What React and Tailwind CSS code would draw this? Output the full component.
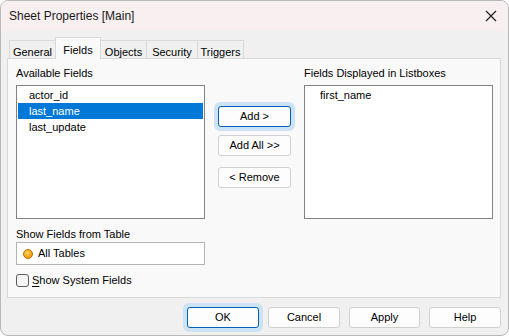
import React from "react";

const font = { fontFamily: '"Liberation Sans", Arial, sans-serif' };

function Tab({ label, selected, w }) {
  if (selected) {
    return (
      <div
        className="relative z-10 -ml-px mb-[-1px] flex h-[22px] items-start justify-center border border-b-0 border-[#d9d9d9] bg-[#f9f9f9] pt-[4px] text-[11px]"
        style={{ width: w }}
      >
        {label}
      </div>
    );
  }
  return (
    <div
      className="-ml-px flex h-[18px] items-start justify-center border border-b-0 border-[#d9d9d9] bg-[#f0f0f0] pt-[3px] text-[11px] first:ml-0"
      style={{ width: w }}
    >
      {label}
    </div>
  );
}

function Btn({ children, focused, className = "" }) {
  if (focused) {
    return (
      <div className={"rounded-[6px] bg-[#cde3f5] p-[4px] -m-[4px] " + className}>
        <div className="flex h-[21px] w-[73px] items-center justify-center rounded-[3px] border border-[#005fb8] bg-[#fdfdfd] text-[11px]">
          {children}
        </div>
      </div>
    );
  }
  return (
    <div
      className={
        "flex h-[21px] w-[73px] items-center justify-center rounded-[3px] border border-[#d0d0d0] bg-[#fdfdfd] text-[11px] " +
        className
      }
    >
      {children}
    </div>
  );
}

function BottomBtn({ children, focused, w = 72 }) {
  if (focused) {
    return (
      <div className="-m-[4px] rounded-[6px] bg-[#cde3f5] p-[4px]">
        <div
          className="flex h-[21px] items-center justify-center rounded-[3px] border border-[#005fb8] bg-[#fdfdfd] text-[11px]"
          style={{ width: w }}
        >
          {children}
        </div>
      </div>
    );
  }
  return (
    <div
      className="flex h-[21px] items-center justify-center rounded-[3px] border border-[#d0d0d0] bg-[#fdfdfd] text-[11px]"
      style={{ width: w }}
    >
      {children}
    </div>
  );
}

export default function App() {
  return (
    <div
      className="flex h-[336px] w-[509px] flex-col overflow-hidden rounded-[8px] border border-[#b9b9b9] bg-[#f0f0f0] text-black"
      style={font}
    >
      {/* Title bar */}
      <div className="flex h-[30px] shrink-0 items-center justify-between bg-[#f7eff0] pl-[8px] pr-[8px]">
        <span className="text-[12px] leading-none text-[#1a1a1a]">Sheet Properties [Main]</span>
        <svg width="12" height="12" viewBox="0 0 12 12" className="mr-[3px]">
          <path d="M1 1 L11 11 M11 1 L1 11" stroke="#1a1a1a" strokeWidth="1.1" fill="none" />
        </svg>
      </div>

      {/* Body */}
      <div className="flex flex-1 flex-col pl-[6px] pr-[7px] pt-[6px]">
        {/* Tabs */}
        <div className="ml-[2px] flex items-end">
          <Tab label="General" w={47} />
          <Tab label="Fields" w={46} selected />
          <Tab label="Objects" w={47} />
          <Tab label="Security" w={52} />
          <Tab label="Triggers" w={47} />
        </div>

        {/* Panel */}
        <div className="flex h-[240px] flex-col border border-[#d9d9d9] bg-[#f9f9f9] pl-[8px] pr-[7px] pt-[8px]">
          <div className="flex">
            {/* Left column */}
            <div className="flex w-[189px] flex-col">
              <div className="text-[11px] leading-[13px]">Available Fields</div>
              <div className="mt-[5px] h-[134px] border border-[#828282] bg-white p-px">
                <div className="flex h-[16px] items-center pl-[11px] text-[11px]">actor_id</div>
                <div className="flex h-[16px] items-center bg-[#0078d7] pl-[11px] text-[11px] text-white">
                  last_name
                </div>
                <div className="flex h-[16px] items-center pl-[11px] text-[11px]">last_update</div>
              </div>
              <div className="mt-[9px] text-[11px] leading-[13px]">Show Fields from Table</div>
              <div className="mt-px flex h-[23px] items-center border border-[#b4b4b4] bg-white pl-[6px]">
                <span className="h-[10px] w-[10px] rounded-full border border-[#b86f00] bg-[radial-gradient(circle_at_40%_35%,#ffcf6a,#f29a00_70%)]" />
                <span className="ml-[5px] text-[11px]">All Tables</span>
              </div>
              <div className="mt-[8px] flex h-[14px] items-center">
                <span className="h-[13px] w-[13px] rounded-[3px] border border-[#5c5c5c] bg-[#f5f5f5]" />
                <span className="ml-[3px] text-[11px]">
                  <span className="underline underline-offset-2">S</span>how System Fields
                </span>
              </div>
            </div>

            {/* Middle buttons */}
            <div className="ml-[13px] flex w-[73px] flex-col pt-[39px]">
              <Btn focused>Add &gt;</Btn>
              <Btn className="mt-[8px]">Add All &gt;&gt;</Btn>
              <Btn className="mt-[11px]">&lt; Remove</Btn>
            </div>

            {/* Right column */}
            <div className="ml-[13px] flex w-[189px] flex-col">
              <div className="text-[11px] leading-[13px]">Fields Displayed in Listboxes</div>
              <div className="mt-[5px] h-[134px] border border-[#828282] bg-white p-px">
                <div className="flex h-[16px] items-center pl-[14px] text-[11px]">first_name</div>
              </div>
            </div>
          </div>
        </div>

        {/* Bottom buttons */}
        <div className="mt-[9px] flex justify-end gap-[9px] pr-0">
          <BottomBtn focused>OK</BottomBtn>
          <BottomBtn>Cancel</BottomBtn>
          <BottomBtn w={71}>Apply</BottomBtn>
          <BottomBtn>Help</BottomBtn>
        </div>
      </div>
    </div>
  );
}
